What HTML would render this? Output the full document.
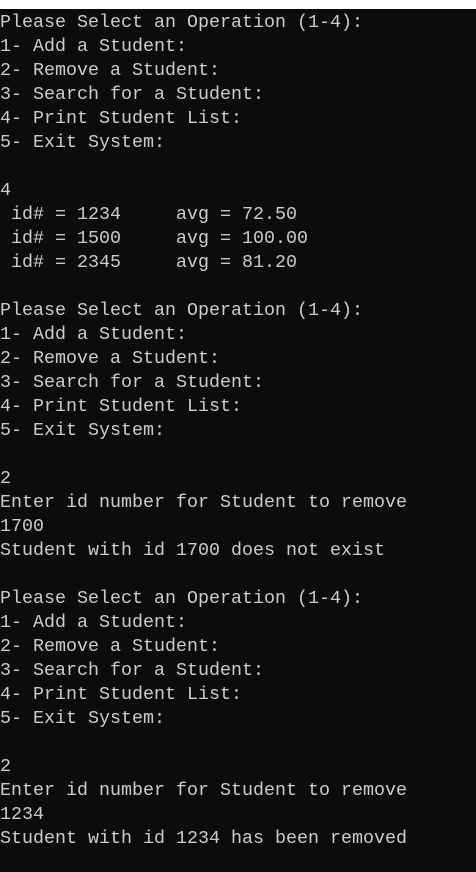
<!DOCTYPE html>
<html><head><style>
html,body{margin:0;padding:0;width:476px;height:872px;overflow:hidden;background:#0c0c0c;}
.top{position:absolute;left:0;top:0;width:476px;height:9px;background:#fff;}
pre{position:absolute;left:0;top:11px;margin:0;font-family:"Liberation Mono",monospace;font-size:18.33px;line-height:24px;color:#cccccc;}
</style></head><body>
<div class="top"></div>
<pre>Please Select an Operation (1-4):
1- Add a Student:
2- Remove a Student:
3- Search for a Student:
4- Print Student List:
5- Exit System:

4
 id# = 1234     avg = 72.50
 id# = 1500     avg = 100.00
 id# = 2345     avg = 81.20

Please Select an Operation (1-4):
1- Add a Student:
2- Remove a Student:
3- Search for a Student:
4- Print Student List:
5- Exit System:

2
Enter id number for Student to remove
1700
Student with id 1700 does not exist

Please Select an Operation (1-4):
1- Add a Student:
2- Remove a Student:
3- Search for a Student:
4- Print Student List:
5- Exit System:

2
Enter id number for Student to remove
1234
Student with id 1234 has been removed</pre>
</body></html>
